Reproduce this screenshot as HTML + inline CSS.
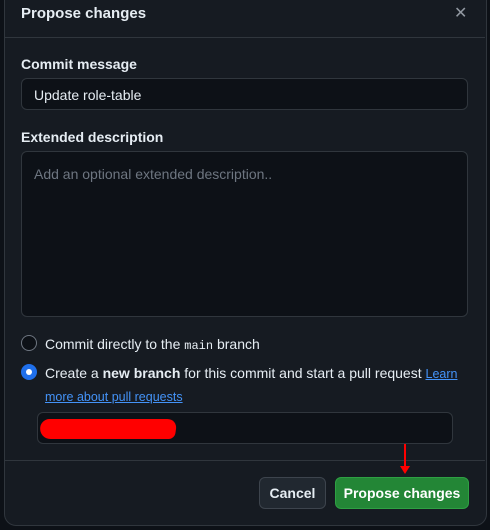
<!DOCTYPE html>
<html><head><style>
body{margin:0;width:490px;height:530px;background:#0d1117;font-family:"Liberation Sans",sans-serif;color:#e6edf3;position:relative;overflow:hidden;font-size:14px}
.dlg{position:absolute;left:4px;top:-12px;width:481px;height:536px;background:#161b22;border:1px solid #30363d;border-radius:12px}
.a{position:absolute}
.lbl{font-weight:bold;font-size:14px}
.inp{position:absolute;background:#0d1117;border:1px solid #30363d;border-radius:6px;box-sizing:border-box}
</style></head><body>
<div class="dlg"></div>
<div class="a lbl" style="left:21px;top:5px;font-size:15px">Propose changes</div>
<div class="a" style="left:454px;top:3px;color:#9198a1;font-size:16px">✕</div>
<div class="a" style="left:5px;top:37px;width:480px;height:1px;background:#30363d"></div>
<div class="a lbl" style="left:21px;top:56px">Commit message</div>
<div class="inp" style="left:21px;top:78px;width:447px;height:32px;padding:8px 12px">Update role-table</div>
<div class="a lbl" style="left:21px;top:129px">Extended description</div>
<div class="inp" style="left:21px;top:151px;width:447px;height:166px;padding:14px 12px;color:#6e7681">Add an optional extended description..</div>
<div class="a" style="left:21px;top:335px;width:14px;height:14px;border:1px solid #6e7681;border-radius:50%;background:#0d1117"></div>
<div class="a" style="left:45px;top:336px">Commit directly to the <span style="font-family:'Liberation Mono',monospace;font-size:12px">main</span> branch</div>
<div class="a" style="left:21px;top:364px;width:16px;height:16px;border-radius:50%;background:#1f6feb"></div>
<div class="a" style="left:26px;top:369px;width:6px;height:6px;border-radius:50%;background:#fff"></div>
<div class="a" style="left:45px;top:362px;width:420px;line-height:22px">Create a <b>new branch</b> for this commit and start a pull request <a style="color:#4493f8;text-decoration:underline;font-size:12.5px">Learn more about pull requests</a></div>
<div class="inp" style="left:37px;top:412px;width:416px;height:32px"></div>
<div class="a" style="left:40px;top:419px;width:136px;height:20px;background:#f00;border-radius:8px 10px 6px 12px;transform:skewX(-8deg)"></div>
<div class="a" style="left:5px;top:460px;width:480px;height:1px;background:#30363d"></div>
<div class="a" style="left:259px;top:477px;width:67px;height:32px;box-sizing:border-box;background:#212830;border:1px solid #3d444d;border-radius:6px;text-align:center;line-height:30px;font-weight:bold">Cancel</div>
<div class="a" style="left:335px;top:477px;width:134px;height:32px;box-sizing:border-box;background:#238636;border:1px solid #2ea043;border-radius:6px;text-align:center;line-height:30px;font-weight:bold;color:#fff">Propose changes</div>
<div class="a" style="left:404px;top:444px;width:2px;height:24px;background:#f00"></div>
<div class="a" style="left:400px;top:466px;width:0;height:0;border-left:5px solid transparent;border-right:5px solid transparent;border-top:8px solid #f00"></div>
</body></html>
